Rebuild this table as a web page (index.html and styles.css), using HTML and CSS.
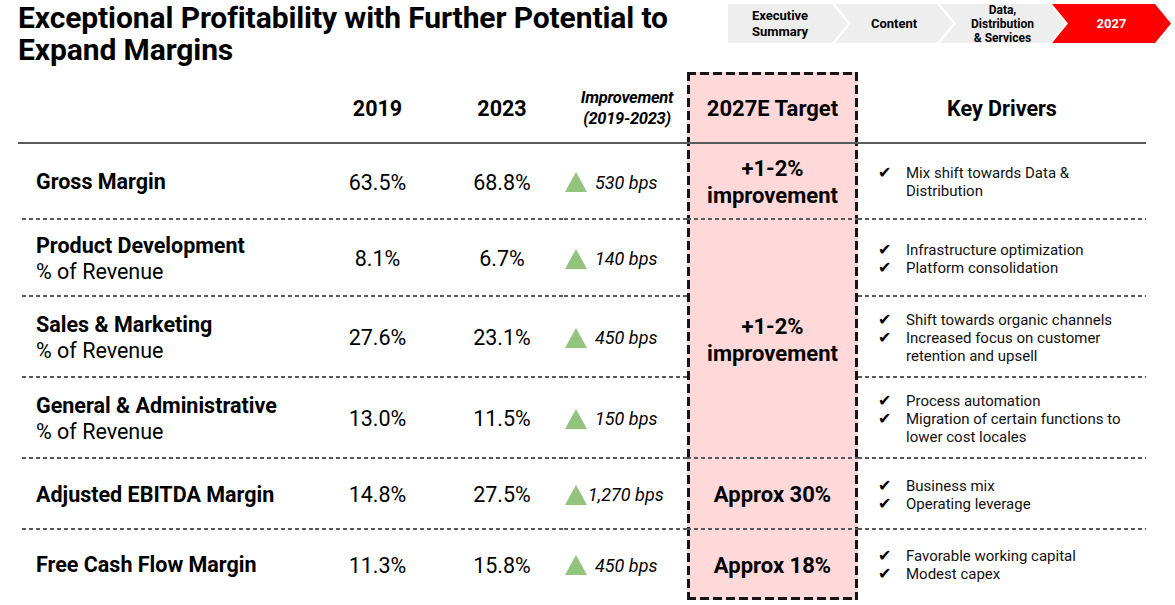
FILE: index.html
```html
<!DOCTYPE html>
<html lang="en">
<head>
<meta charset="utf-8">
<title>Exceptional Profitability</title>
<link rel="stylesheet" href="styles.css">
</head>
<body>
<div class="slide">
  <header class="top">
    <h1 class="title">Exceptional Profitability with Further Potential to<br>Expand Margins</h1>
    <nav class="crumbs">
      <div class="crumb first">Executive<br>Summary</div>
      <div class="crumb">Content</div>
      <div class="crumb small">Data,<br>Distribution<br>&amp; Services</div>
      <div class="crumb active">2027</div>
    </nav>
  </header>

  <div class="table">
    <div class="frame"></div>

    <!-- header -->
    <div class="h"></div>
    <div class="h year">2019</div>
    <div class="h year">2023</div>
    <div class="h imp-h">Improvement<br>(2019-2023)</div>
    <div class="h tgt r1">2027E Target</div>
    <div class="h year">Key Drivers</div>

    <!-- gross margin -->
    <div class="c label sep"><b>Gross Margin</b></div>
    <div class="c num sep">63.5%</div>
    <div class="c num sep">68.8%</div>
    <div class="c imp sep"><span class="tri"></span><i>530 bps</i></div>
    <div class="c tgt sep r2">+1-2%<br>improvement</div>
    <div class="c drv sep">
      <ul><li>Mix shift towards Data &amp;<br>Distribution</li></ul>
    </div>

    <!-- product development -->
    <div class="c label sep"><b>Product Development</b><span>% of Revenue</span></div>
    <div class="c num sep">8.1%</div>
    <div class="c num sep">6.7%</div>
    <div class="c imp sep"><span class="tri"></span><i>140 bps</i></div>
    <div class="c tgt sep r3">+1-2%<br>improvement</div>
    <div class="c drv sep">
      <ul><li>Infrastructure optimization</li><li>Platform consolidation</li></ul>
    </div>

    <!-- sales & marketing -->
    <div class="c label sep"><b>Sales &amp; Marketing</b><span>% of Revenue</span></div>
    <div class="c num sep">27.6%</div>
    <div class="c num sep">23.1%</div>
    <div class="c imp sep"><span class="tri"></span><i>450 bps</i></div>
    <div class="c drv sep">
      <ul><li>Shift towards organic channels</li><li>Increased focus on customer<br>retention and upsell</li></ul>
    </div>

    <!-- G&A -->
    <div class="c label sep"><b>General &amp; Administrative</b><span>% of Revenue</span></div>
    <div class="c num sep">13.0%</div>
    <div class="c num sep">11.5%</div>
    <div class="c imp sep"><span class="tri"></span><i>150 bps</i></div>
    <div class="c drv sep">
      <ul><li>Process automation</li><li>Migration of certain functions to<br>lower cost locales</li></ul>
    </div>

    <!-- EBITDA -->
    <div class="c label sep"><b>Adjusted EBITDA Margin</b></div>
    <div class="c num sep">14.8%</div>
    <div class="c num sep">27.5%</div>
    <div class="c imp sep tight"><span class="tri"></span><i>1,270 bps</i></div>
    <div class="c tgt sep r6">Approx 30%</div>
    <div class="c drv sep">
      <ul><li>Business mix</li><li>Operating leverage</li></ul>
    </div>

    <!-- FCF -->
    <div class="c label"><b>Free Cash Flow Margin</b></div>
    <div class="c num">11.3%</div>
    <div class="c num">15.8%</div>
    <div class="c imp"><span class="tri"></span><i>450 bps</i></div>
    <div class="c tgt r7">Approx 18%</div>
    <div class="c drv">
      <ul><li>Favorable working capital</li><li>Modest capex</li></ul>
    </div>
  </div>
</div>
</body>
</html>
```

FILE: styles.css
```css
* { box-sizing: border-box; margin: 0; padding: 0; }

body {
  width: 1175px;
  height: 605px;
  overflow: hidden;
  background: #ffffff;
  font-family: Roboto, "Liberation Sans", sans-serif;
  color: #000;
}

.slide {
  padding: 1px 0 0 18px;
}

.top {
  display: flex;
  justify-content: space-between;
  height: 71px;
}

.title {
  font-size: 30px;
  line-height: 31.5px;
  font-weight: 700;
  letter-spacing: -0.1px;
  margin-top: 1px;
}

/* breadcrumb chevrons */
.crumbs {
  display: flex;
  height: 39px;
  margin-top: 3px;
  margin-right: 4px;
}

.crumb {
  height: 39px;
  width: 118px;
  margin-left: -13px;
  padding: 0 16px;
  display: flex;
  align-items: center;
  justify-content: center;
  text-align: center;
  background: #eeeeee;
  font-size: 13px;
  line-height: 16px;
  font-weight: 700;
  clip-path: polygon(0 0, calc(100% - 16px) 0, 100% 50%, calc(100% - 16px) 100%, 0 100%, 16px 50%);
}

.crumb.first {
  width: 120px;
  margin-left: 0;
  padding-left: 0;
  clip-path: polygon(0 0, calc(100% - 16px) 0, 100% 50%, calc(100% - 16px) 100%, 0 100%);
}

.crumb.small {
  width: 125px;
  font-size: 12px;
  line-height: 14px;
}

.crumb.active {
  width: 119px;
  background: #ff0000;
  color: #fff;
  font-size: 13px;
}

/* table */
.table {
  display: grid;
  grid-template-columns: 297px 125px 124px 123px 171px 288px;
  grid-template-rows: 72px 76px 77px 81px 81px 71px 70px;
}

.frame {
  grid-column: 5;
  grid-row: 1 / 8;
  background:
    repeating-linear-gradient(90deg, #151515 0 9px, transparent 9px 13px) 0 0 / 100% 3px no-repeat,
    repeating-linear-gradient(90deg, #151515 0 9px, transparent 9px 13px) 0 100% / 100% 3px no-repeat,
    repeating-linear-gradient(180deg, #151515 0 9px, transparent 9px 13px) 0 0 / 3px 100% no-repeat,
    repeating-linear-gradient(180deg, #151515 0 9px, transparent 9px 13px) 100% 0 / 3px 100% no-repeat,
    #ffd9d9;
}

.h {
  display: flex;
  align-items: center;
  justify-content: center;
  text-align: center;
  border-bottom: 2px solid #595959;
  padding-top: 2px;
}

.year {
  font-size: 21.5px;
  font-weight: 700;
}

.imp-h {
  font-size: 16.5px;
  line-height: 21px;
  font-weight: 700;
  font-style: italic;
  letter-spacing: -0.3px;
  padding-left: 3px;
}

.c {
  display: flex;
  align-items: center;
}

.sep {
  background-image: repeating-linear-gradient(90deg, #595959 0 4px, transparent 4px 7px);
  background-size: 100% 2px;
  background-position: 0 100%;
  background-repeat: no-repeat;
}

.label.sep {
  background-position: 4px 100%;
}

.label {
  flex-direction: column;
  align-items: flex-start;
  justify-content: center;
  padding-left: 18px;
  font-size: 21.5px;
  line-height: 26px;
}

.label b {
  font-weight: 700;
}

.num {
  justify-content: center;
  font-size: 21.5px;
}

.imp {
  padding-left: 1px;
  font-size: 18px;
}

.tri {
  width: 0;
  height: 0;
  border-left: 11px solid transparent;
  border-right: 11px solid transparent;
  border-bottom: 20px solid #93c47d;
  margin-right: 8px;
}

.imp.tight .tri {
  margin-right: 1px;
}

.tgt {
  grid-column: 5;
  justify-content: center;
  text-align: center;
  font-size: 22px;
  line-height: 27px;
  font-weight: 700;
}

.r1 { grid-row: 1; }
.r2 { grid-row: 2; }
.r3 { grid-row: 3 / 6; }
.r6 { grid-row: 6; }
.r7 { grid-row: 7; }

.drv {
  padding-left: 20px;
  font-size: 15px;
  line-height: 18px;
  color: #111;
}

.drv ul {
  list-style: none;
}

.drv li {
  position: relative;
  padding-left: 28px;
}

.drv li::before {
  content: "\2714";
  position: absolute;
  left: 0;
  top: 0;
  font-family: "DejaVu Sans", sans-serif;
  font-size: 16px;
  color: #000;
}
```
